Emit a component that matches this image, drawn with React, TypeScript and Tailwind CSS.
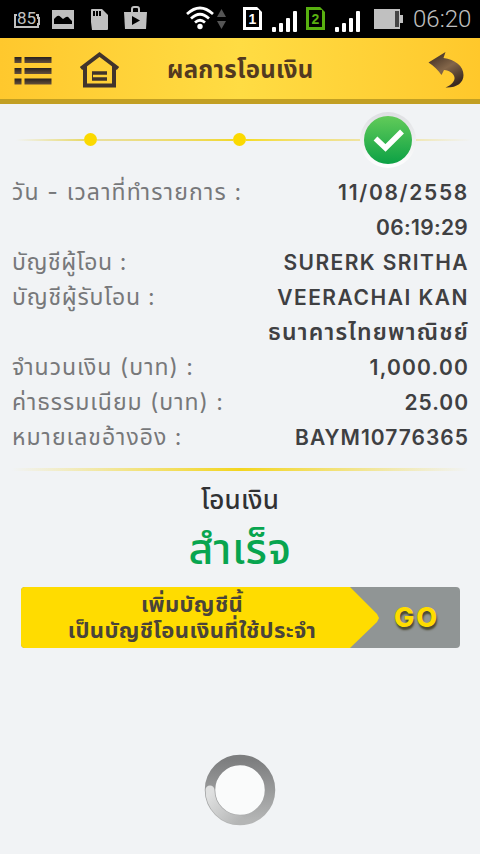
const rows = [
  { label: "วัน - เวลาที่ทำรายการ :", value: "11/08/2558", l: "tracking-[1.15px]", v: "text-[21px] tracking-[1.7px] -mr-px" },
  { label: "", value: "06:19:29", l: "", v: "text-[21px] tracking-[0.3px]" },
  { label: "บัญชีผู้โอน :", value: "SURERK SRITHA", l: "tracking-[0.6px]", v: "text-[21px] tracking-[1.4px] -mr-px" },
  { label: "บัญชีผู้รับโอน :", value: "VEERACHAI KAN", l: "tracking-[0.8px]", v: "text-[21px] tracking-[1.5px] -mr-px" },
  { label: "", value: "ธนาคารไทยพาณิชย์", l: "", v: "text-[23px] tracking-[1.2px] -mr-px" },
  { label: "จำนวนเงิน (บาท) :", value: "1,000.00", l: "tracking-[1px]", v: "text-[21px] tracking-[1.2px] -mr-px" },
  { label: "ค่าธรรมเนียม (บาท) :", value: "25.00", l: "tracking-[0.95px]", v: "text-[21px] tracking-[1px] -mr-px" },
  { label: "หมายเลขอ้างอิง :", value: "BAYM10776365", l: "tracking-[1px]", v: "text-[21px] tracking-[1px] -mr-px" },
];

function SignalBars() {
  return (
    <svg width="26" height="22" viewBox="0 0 26 22" fill="#fff">
      <rect x="0" y="16" width="4" height="5" rx="1" />
      <rect x="7" y="12" width="4" height="9" rx="1" />
      <rect x="14" y="7" width="4" height="14" rx="1" />
      <rect x="21" y="0" width="4" height="21" rx="1" />
    </svg>
  );
}

function SimCard({ n, active }: { n: string; active?: boolean }) {
  return (
    <div
      className={
        "h-[23px] w-[19px] p-[3px] [clip-path:polygon(0_0,74%_0,100%_22%,100%_100%,0_100%)] " +
        (active ? "bg-[#58b010] text-[#58b010]" : "bg-white text-white")
      }
    >
      <div className="flex h-full items-center justify-center bg-black pt-px font-['Liberation_Sans'] text-[14px] font-bold leading-none">
        {n}
      </div>
    </div>
  );
}

function StatusBar() {
  return (
    <div className="flex h-[38px] items-center bg-black text-[#c0c0c0]">
      <div className="relative ml-[14px] mt-[2px] h-[17px] w-[26px]">
        <svg className="absolute inset-0" width="26" height="17" viewBox="0 0 26 17" fill="none" stroke="#c0c0c0" strokeWidth="2">
          <path d="M3 3H1v12h23v-3h1V6h-1V3h-2" />
        </svg>
        <span className="absolute left-[3px] top-0 h-[13px] bg-black font-[Roboto] text-[17px] leading-[12px]">85</span>
      </div>
      <svg className="ml-[12px] mt-px" width="22" height="19" viewBox="0 0 22 19">
        <path fill="#c0c0c0" d="M0 0h22v19H0z" />
        <path fill="#000" d="M2 14V9l2-2q2-2 3.500-1L11 9l3-2q2-1 3 1l3 3v3z" />
      </svg>
      <svg className="ml-[17px]" width="17" height="21" viewBox="0 0 17 21">
        <path fill="#c0c0c0" d="M0 1q0-1 1-1h10l6 6v14q0 1-1 1H1l-1-8z" />
        <path stroke="#000" strokeWidth="2" d="M3 2v5M6 2v5M9 2v5" />
      </svg>
      <svg className="-mt-[3px] ml-[16px]" width="23" height="23" viewBox="0 0 23 23">
        <path fill="#c0c0c0" d="M0 6h23l-1 17H1z" />
        <path fill="none" stroke="#c0c0c0" strokeWidth="2" d="M8 6V3q0-2 2-2h3q2 0 2 2v3" />
        <path fill="#000" d="M8 10v9l8-4.500z" />
      </svg>
      <svg className="ml-[39px] -mt-[2px]" width="28" height="24" viewBox="0 0 28 24" fill="none" stroke="#fff" strokeWidth="2.700">
        <path d="M1 8Q14-4 27 8M5 12.500Q14 4 23 12.500M9 16.500Q14 12 19 16.500" />
        <circle cx="14" cy="20.500" r="2.700" fill="#fff" stroke="none" />
      </svg>
      <svg className="ml-[3px]" width="9" height="20" viewBox="0 0 9 20" fill="#555">
        <path d="M4.500 0L9 8H0zM0 12h9L4.500 20z" />
      </svg>
      <div className="ml-[17px] -mt-px"><SimCard n="1" /></div>
      <div className="ml-[10px] mt-[6px]"><SignalBars /></div>
      <div className="ml-[8px] -mt-px"><SimCard n="2" active /></div>
      <div className="ml-[10px] mt-[6px]"><SignalBars /></div>
      <svg className="ml-[13px]" width="29" height="20" viewBox="0 0 29 20">
        <path fill="#c0c0c0" d="M0 0h26v6h3v8h-3v6H0z" />
        <path fill="#444" d="M21 2h4v16h-4z" />
      </svg>
      <span className="ml-[10px] font-[Roboto] text-[24px] font-light leading-none">06:20</span>
    </div>
  );
}

function Header() {
  return (
    <div className="flex h-[66px] items-center border-b-[5px] border-[#c29f23] bg-linear-to-r from-[#ffc82d] via-[#ffdc43] to-[#ffc82b] pb-px">
      <svg className="ml-[14px] mt-[4px]" width="38" height="29" viewBox="0 0 38 29">
        <defs>
          <linearGradient id="ink" x1="0" y1="0" x2="0" y2="1">
            <stop offset="0" stopColor="#28211f" />
            <stop offset="1" stopColor="#66503a" />
          </linearGradient>
        </defs>
        <g fill="url(#ink)">
          <path d="M0.500 1h7v6h-7zM10.500 1h27v6h-27z" />
          <path d="M0.500 12h7v6h-7zM10.500 12h27v6h-27z" />
          <path d="M0.500 22.500h7v6h-7zM10.500 22.500h27v6h-27z" />
        </g>
      </svg>
      <svg className="ml-[27px] mt-[3px]" width="41" height="37" viewBox="0 0 41 37" fill="none" stroke="#41342c">
        <path strokeWidth="4" d="M2 17.500L20.500 3.500L39 17.500M6 15v19.500h29V15" />
        <path strokeWidth="3.500" d="M13 22h15M13 28h15" />
        <path strokeWidth="1" d="M13.500 21v8" />
      </svg>
      <h1 className="ml-[47px] mt-[4px] w-[146px] whitespace-nowrap text-[24px] font-bold leading-[40px] tracking-[0.3px] text-[#523a20]">ผลการโอนเงิน</h1>
      <svg className="ml-[115px] mt-[3px]" width="37" height="37" viewBox="0 0 37 37">
        <defs>
          <linearGradient id="back" x1="0" y1="0" x2="0.600" y2="1">
            <stop offset="0" stopColor="#33231a" />
            <stop offset="0.550" stopColor="#83664a" />
            <stop offset="1" stopColor="#3b2a21" />
          </linearGradient>
        </defs>
        <path fill="url(#back)" d="M0.500 11.500L17.500 1l-2 6C27 8.500 35.500 15 35.500 24c0 8-7 13-18 12.500c6-2.500 9.500-6.500 9-10c-0.500-4-5-7-10.500-7.500L13.500 24C10 19 6 15 0.500 11.500z" />
      </svg>
    </div>
  );
}

function Steps() {
  return (
    <div className="flex h-[71px] items-center">
      <div className="ml-4 h-[2px] w-[68px] bg-linear-to-r from-transparent to-[#e8d96a]" />
      <div className="size-[13px] rounded-full bg-[#fbd900]" />
      <div className="h-[2px] w-[136px] bg-linear-to-r from-[#e9df9c] to-[#f1d82b]" />
      <div className="size-[13px] rounded-full bg-[#fbd900]" />
      <div className="h-[2px] w-[114px] bg-linear-to-r from-[#f5dc20] to-[#efe3a0]" />
      <div className="mt-px rounded-full bg-linear-to-b from-[#dedfe2] to-white p-[4px]">
        <svg width="48" height="48" viewBox="0 0 48 48">
          <defs>
            <linearGradient id="done" x1="0" y1="0" x2="0" y2="1">
              <stop offset="0" stopColor="#62cb59" />
              <stop offset="1" stopColor="#0ca145" />
            </linearGradient>
          </defs>
          <circle cx="24" cy="24" r="24" fill="url(#done)" />
          <path fill="none" stroke="#fff" strokeWidth="5.500" d="M11.500 22.500L21.500 32L38 15.500" />
        </svg>
      </div>
      <div className="h-[2px] w-[56px] bg-linear-to-r from-[#f0e7b5] to-transparent" />
    </div>
  );
}

export default function App() {
  return (
    <main className="h-[854px] w-[480px] overflow-hidden bg-[#f1f3f5] font-['Inter','Noto_Sans_Thai',sans-serif]">
      <StatusBar />
      <Header />
      <Steps />

      <div className="px-3">
        {rows.map((row) => (
          <div key={row.value} className="flex h-[35px] items-center justify-between whitespace-nowrap">
            <span className={"text-[23px] text-[#77787a] " + row.l}>{row.label}</span>
            <span className={"font-semibold text-[#3f4042] " + row.v}>{row.value}</span>
          </div>
        ))}
      </div>

      <div className="mx-3 mt-[13px] h-[3px] bg-linear-to-r from-transparent via-[#f3d51f] to-transparent" />

      <div className="flex flex-col items-center whitespace-nowrap">
        <p className="mt-[9px] text-[26px] font-medium leading-[40px] tracking-[0.2px] text-[#303133]">โอนเงิน</p>
        <p className="text-[43px] font-medium leading-[56px] tracking-[0.7px] text-[#08a54f]">สำเร็จ</p>
      </div>

      <button className="ml-[21px] mt-[11px] flex h-[61px] w-[439px] items-center overflow-hidden rounded-[4px] bg-[#909595]">
        <div className="flex h-full w-[359px] flex-col items-center justify-center whitespace-nowrap bg-[#ffdc00] pb-px pr-[17px] text-[22px] font-bold leading-[26px] tracking-[0.4px] text-[#4a443a] [clip-path:polygon(0_0,329px_0,356px_27px,358px_31px,356px_35px,329px_100%,0_100%)]">
          <span>เพิ่มบัญชีนี้</span>
          <span>เป็นบัญชีโอนเงินที่ใช้ประจำ</span>
        </div>
        <span className="ml-[14px] mt-[2px] text-[27px] font-extrabold tracking-[2px] text-[#ffdc00] [text-shadow:1px_3px_2px_#4b4930]">GO</span>
      </button>

      <svg className="ml-[204px] mt-[106px]" width="72" height="72" viewBox="0 0 72 72">
        <defs>
          <linearGradient id="ring" x1="0" y1="0" x2="0" y2="1">
            <stop offset="0" stopColor="#7d7e7f" />
            <stop offset="1" stopColor="#b4b5b5" />
          </linearGradient>
          <linearGradient id="tail" gradientUnits="userSpaceOnUse" x1="6" y1="40" x2="36" y2="66">
            <stop offset="0" stopColor="#dfe0e0" />
            <stop offset="1" stopColor="#b4b5b5" />
          </linearGradient>
        </defs>
        <circle cx="36" cy="36" r="25" fill="#fafbfb" />
        <circle cx="36" cy="36" r="30" fill="none" stroke="url(#ring)" strokeWidth="10.500" />
        <path fill="none" stroke="url(#tail)" strokeWidth="9" strokeLinecap="round" d="M6 36a30 30 0 0 0 30 30" />
      </svg>
    </main>
  );
}
